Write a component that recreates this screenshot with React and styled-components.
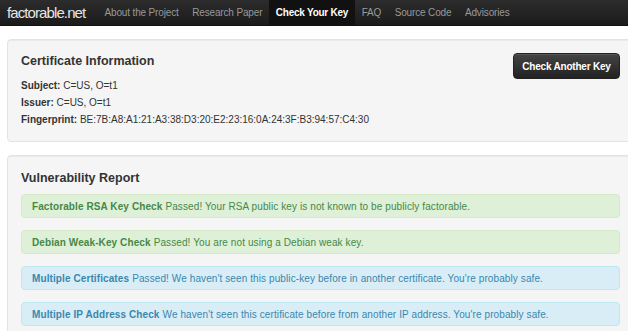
import React from "react";
import styled, { createGlobalStyle } from "styled-components";

const GlobalStyle = createGlobalStyle`
  html, body {
    margin: 0;
    padding: 0;
    background: #fff;
    overflow: hidden;
  }
  body {
    font-family: "Liberation Sans", Arial, sans-serif;
    color: #333;
  }
`;

const navItems = [
  "About the Project",
  "Research Paper",
  "Check Your Key",
  "FAQ",
  "Source Code",
  "Advisories",
];

const checks = [
  {
    kind: "success",
    name: "Factorable RSA Key Check",
    text: "Passed! Your RSA public key is not known to be publicly factorable.",
  },
  {
    kind: "success",
    name: "Debian Weak-Key Check",
    text: "Passed! You are not using a Debian weak key.",
  },
  {
    kind: "info",
    name: "Multiple Certificates",
    text: "Passed! We haven't seen this public-key before in another certificate. You're probably safe.",
  },
  {
    kind: "info",
    name: "Multiple IP Address Check",
    text: "We haven't seen this certificate before from another IP address. You're probably safe.",
  },
];

const alertColors = {
  success: { bg: "#dff0d8", border: "#d6e9c6", color: "#468847" },
  info: { bg: "#d9edf7", border: "#bce8f1", color: "#3a87ad" },
};

const Navbar = styled.div`
  height: 25px;
  display: flex;
  align-items: stretch;
  background: linear-gradient(#2c2c2c, #1b1b1b);
  border-bottom: 1px solid #111;
`;

const Brand = styled.a`
  display: flex;
  align-items: center;
  padding: 0 0 0 7px;
  width: 91px;
  color: #e6e6e6;
  font-size: 15px;
  letter-spacing: -0.9px;
  text-decoration: none;
`;

const NavList = styled.ul`
  display: flex;
  margin: 0;
  padding: 0;
  list-style: none;
`;

const NavItem = styled.li`
  display: flex;
  align-items: center;
  padding: 0 7px 0 6.5px;
  font-size: 10px;
  letter-spacing: ${(p) => (p.active ? "-0.25px" : "-0.15px")};
  color: ${(p) => (p.active ? "#fff" : "#999")};
  font-weight: ${(p) => (p.active ? "bold" : "normal")};
  background: ${(p) => (p.active ? "#111" : "transparent")};
`;

const Page = styled.div`
  padding: 13px 0 0 7px;
  width: 627px;
  display: flex;
  flex-direction: column;
  gap: 13px;
`;

const Well = styled.div`
  box-sizing: border-box;
  width: 627px;
  background: #f5f5f5;
  border: 1px solid #e3e3e3;
  border-radius: 4px;
  padding: ${(p) => p.pad};
  box-shadow: inset 0 1px 1px rgba(0, 0, 0, 0.05);
`;

const WellHead = styled.div`
  display: flex;
  justify-content: space-between;
  align-items: flex-start;
`;

const Title = styled.h3`
  margin: 0 0 ${(p) => p.gap || 0}px;
  font-size: 12.5px;
  font-weight: bold;
  color: #333;
  line-height: 16px;
`;

const InfoLine = styled.div`
  font-size: 10px;
  line-height: 17px;
  color: #333;
  b {
    font-weight: bold;
  }
`;

const Button = styled.button`
  margin: 0;
  width: 107px;
  height: 26px;
  font-family: inherit;
  font-size: 10px;
  font-weight: bold;
  color: #fff;
  letter-spacing: -0.2px;
  background: linear-gradient(#444, #222);
  border: 1px solid #222;
  border-radius: 4px;
  box-shadow: inset 0 1px 0 rgba(255, 255, 255, 0.1);
`;

const AlertList = styled.div`
  display: flex;
  flex-direction: column;
  gap: 12px;
  width: 599px;
`;

const Alert = styled.div`
  box-sizing: border-box;
  height: 24px;
  display: flex;
  align-items: center;
  padding: 0 10px;
  border-radius: 4px;
  font-size: 10px;
  letter-spacing: 0.1px;
  background: ${(p) => alertColors[p.kind].bg};
  border: 1px solid ${(p) => alertColors[p.kind].border};
  color: ${(p) => alertColors[p.kind].color};
  white-space: nowrap;
  strong {
    margin-right: 3px;
  }
`;

export default function App() {
  return (
    <>
      <GlobalStyle />
      <Navbar>
        <Brand href="#">factorable.net</Brand>
        <NavList>
          {navItems.map((item) => (
            <NavItem key={item} active={item === "Check Your Key"}>
              {item}
            </NavItem>
          ))}
        </NavList>
      </Navbar>
      <Page>
        <Well pad="13px 13px 13px 13px">
          <WellHead>
            <div>
              <Title gap={8}>Certificate Information</Title>
              <InfoLine>
                <b>Subject:</b> C=US, O=t1
              </InfoLine>
              <InfoLine>
                <b>Issuer:</b> C=US, O=t1
              </InfoLine>
              <InfoLine>
                <b>Fingerprint:</b> BE:7B:A8:A1:21:A3:38:D3:20:E2:23:16:0A:24:3F:B3:94:57:C4:30
              </InfoLine>
            </div>
            <Button>Check Another Key</Button>
          </WellHead>
        </Well>
        <Well pad="14px 13px 30px 13px">
          <Title gap={8}>Vulnerability Report</Title>
          <AlertList>
            {checks.map((c) => (
              <Alert key={c.name} kind={c.kind}>
                <strong>{c.name}</strong>
                {c.text}
              </Alert>
            ))}
          </AlertList>
        </Well>
      </Page>
    </>
  );
}
